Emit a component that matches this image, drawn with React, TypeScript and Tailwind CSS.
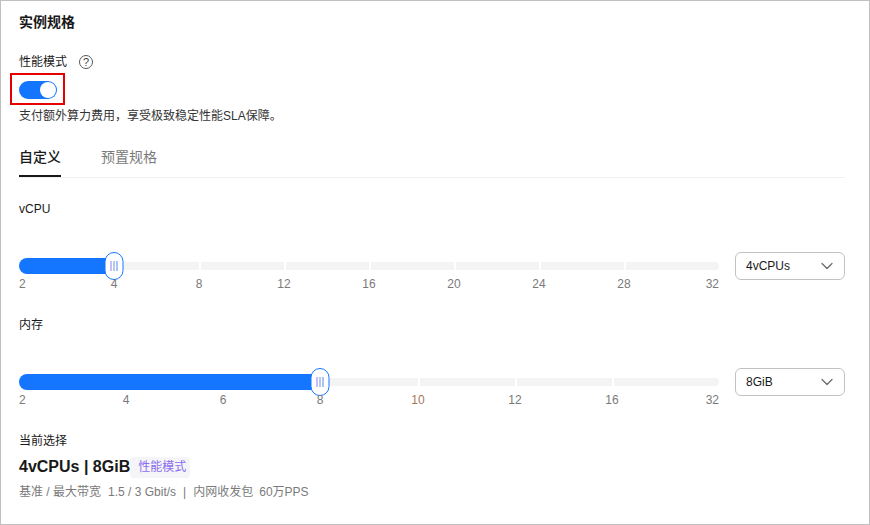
import { ChevronDown } from "lucide-react";

type Tick = { label: string; center: number; className?: string };

const TRACK_LEFT = 19;

const cpuTicks: Tick[] = [
  { label: "2", center: 19 },
  { label: "4", center: 114 },
  { label: "8", center: 199 },
  { label: "12", center: 284 },
  { label: "16", center: 369 },
  { label: "20", center: 454 },
  { label: "24", center: 539 },
  { label: "28", center: 624 },
  { label: "32", center: 719 },
];

const memTicks: Tick[] = [
  { label: "2", center: 19 },
  { label: "4", center: 126 },
  { label: "6", center: 223 },
  { label: "8", center: 320 },
  { label: "10", center: 418, className: "text-[#a5765a]" },
  { label: "12", center: 515 },
  { label: "16", center: 612 },
  { label: "32", center: 719 },
];

function Slider({ ticks, value }: { ticks: Tick[]; value: number }) {
  const inner = ticks.slice(1, -1);
  const active = value - TRACK_LEFT;
  const rest = ticks.filter((t) => t.center > value);

  return (
    <div className="w-[700px]">
      <div className="relative flex h-7 items-center">
        <div className="h-4 rounded-l-full bg-[#1476ff]" style={{ width: active }} />
        <div className="flex h-2 flex-1">
          {rest.map((t, i) => (
            <div
              key={t.label}
              className="h-2 border-l-2 border-white bg-[#f4f4f4] first:border-l-0 last:rounded-r-full"
              style={{ width: t.center - (i === 0 ? value : rest[i - 1].center) }}
            />
          ))}
        </div>
        <div
          className="absolute top-0 flex h-7 w-[19px] -translate-x-1/2 items-center justify-center gap-[2px] rounded-full border border-[#1476ff] bg-white"
          style={{ left: active }}
        >
          <span className="h-[10px] w-px bg-[#8f7cf0]" />
          <span className="h-[10px] w-px bg-[#6f8fe8]" />
          <span className="h-[10px] w-px bg-[#5a86e0]" />
        </div>
      </div>
      <div className="-mt-1 flex h-4 items-center text-xs text-[#7a7a7a]">
        <span className="w-0 whitespace-nowrap">{ticks[0].label}</span>
        {inner.map((t, i) => {
          const prev = i === 0 ? TRACK_LEFT : inner[i - 1].center;
          return (
            <div key={t.label} className="flex justify-end" style={{ width: t.center - prev }}>
              <span className={`w-0 whitespace-nowrap ${t.className ?? ""}`}>
                <span className="inline-block -translate-x-1/2">{t.label}</span>
              </span>
            </div>
          );
        })}
        <span className="ml-auto">{ticks[ticks.length - 1].label}</span>
      </div>
    </div>
  );
}

function SizeSelect({ value }: { value: string }) {
  return (
    <div className="flex h-7 w-[110px] items-center justify-between rounded-md border border-[#c2c2c2] pl-[10px] pr-[7px] text-xs text-[#191919]">
      <span>{value}</span>
      <ChevronDown className="size-5 text-[#6b6b6b]" strokeWidth={1.5} />
    </div>
  );
}

function HelpIcon() {
  return (
    <span className="flex size-[14px] items-center justify-center rounded-full border border-[#595959] text-[11px] leading-none text-[#404040]">
      ?
    </span>
  );
}

export default function App() {
  return (
    <div className="h-[525px] w-[870px] overflow-hidden border border-[#c0c0c0] bg-white pl-[18px] pr-6 font-['Liberation_Sans','Noto_Sans_CJK_SC',sans-serif] text-xs text-[#191919]">
      <h2 className="flex h-[43px] items-end pb-[12px] text-sm font-bold leading-5">实例规格</h2>

      <div className="mt-[10px] flex h-4 items-center gap-3">
        <span>性能模式</span>
        <HelpIcon />
      </div>

      <div className="relative mt-[11px] h-[18px] w-[38px]">
        <div className="flex h-[18px] w-[38px] items-center justify-end rounded-full bg-[#1476ff] pr-px">
          <div className="size-4 rounded-full bg-white" />
        </div>
        <div className="absolute -left-[9px] -top-2 h-8 w-[55px] border-2 border-[#e60000]" />
      </div>

      <p className="mt-[8px] h-4 leading-[18px] text-[#333]">支付额外算力费用，享受极致稳定性能SLA保障。</p>

      <div className="mt-[18px] flex h-[37px] gap-10 border-b border-[#f0f0f0] text-sm leading-5">
        <div className="relative w-[42px] pt-[6px] font-medium">
          自定义
          <span className="absolute inset-x-0 bottom-0 h-[2px] bg-[#191919]" />
        </div>
        <div className="pt-[6px] text-[#7a7a7a]">预置规格</div>
      </div>

      <div className="mt-[22px] h-4 leading-[18px]">vCPU</div>
      <div className="mt-9 flex items-start gap-4">
        <Slider ticks={cpuTicks} value={114} />
        <SizeSelect value="4vCPUs" />
      </div>

      <div className="mt-6 h-4 leading-[18px]">内存</div>
      <div className="mt-9 flex items-start gap-4">
        <Slider ticks={memTicks} value={320} />
        <SizeSelect value="8GiB" />
      </div>

      <div className="mt-6 h-4 leading-[18px]">当前选择</div>

      <div className="mt-2 flex h-[22px] items-center">
        <span className="text-base font-bold text-[#191919]">4vCPUs | 8GiB</span>
        <span className="rounded bg-[#f5f5f7] py-[3px] pl-2 pr-1 text-xs leading-[15px] text-[#8a6cf0]">
          性能模式
        </span>
      </div>

      <div className="mt-[6px] flex h-4 items-center text-xs leading-[18px] text-[#7a7a7a]">
        <span>基准 / 最大带宽</span>
        <span className="ml-[7px]">1.5 / 3 Gbit/s</span>
        <span className="mx-[7px]">|</span>
        <span>内网收发包</span>
        <span className="ml-[6px]">60万PPS</span>
      </div>
    </div>
  );
}
